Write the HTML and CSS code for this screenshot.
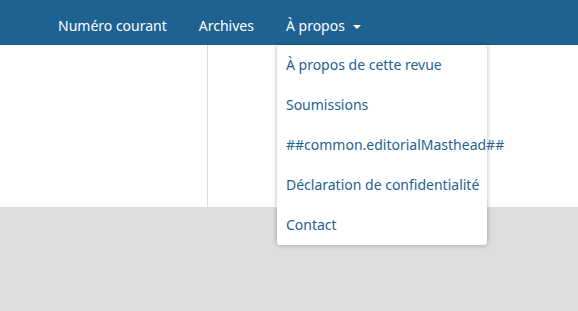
FILE: index.html
```html
<!DOCTYPE html>
<html lang="fr">
<head>
    <meta charset="UTF-8"/>
    <title>Revue</title>
    <link rel="stylesheet" href="styles.css">
</head>
<body>

<header class="site-header">
    <div class="site-name">Revue internationale des sciences humaines et sociales appliquées</div>
    <nav class="main-nav">
        <ul class="menu">
            <li><a href="#">Numéro courant</a></li>
            <li><a href="#">Archives</a></li>
            <li class="has-dropdown">
                <a href="#">À propos <span class="caret"></span></a>
                <ul class="dropdown">
                    <li><a href="#">À propos de cette revue</a></li>
                    <li><a href="#">Soumissions</a></li>
                    <li><a href="#">##common.editorialMasthead##</a></li>
                    <li><a href="#">Déclaration de confidentialité</a></li>
                    <li><a href="#">Contact</a></li>
                </ul>
            </li>
        </ul>
    </nav>
</header>

<div class="page-content">
    <main class="main-col"></main>
    <aside class="sidebar"></aside>
</div>

<footer class="site-footer"></footer>

</body>
</html>
```

FILE: styles.css
```css
body {
  margin: 0;
  font-family: 'Noto Sans', sans-serif;
  font-size: 14px;
  background: #ddd;
  height: 311px;
  overflow: hidden;
}

.site-header {
  display: flow-root;
  background: #1e6292;
  height: 45px;
}

/* title sits mostly above the viewport, only its foot shows */
.site-name {
  color: #ffffff;
  font-size: 27px;
  line-height: 30px;
  margin-top: -25px;
  height: 26px;
  padding-left: 62px;
  white-space: nowrap;
  overflow: hidden;
  opacity: 0.6;
}

.main-nav {
  padding-left: 42px;
}

.menu {
  list-style: none;
  margin: 0;
  padding: 15px 0 0;
  display: flex;
  align-items: flex-start;
}

.menu > li {
  position: relative;
}

.menu > li > a {
  display: block;
  padding: 0 16px;
  color: #ffffff;
  text-decoration: none;
  line-height: 20px;
}

.caret {
  display: inline-block;
  width: 0;
  height: 0;
  margin-left: 4px;
  vertical-align: middle;
  border-top: 4px solid #ffffff;
  border-left: 4px solid transparent;
  border-right: 4px solid transparent;
}

.dropdown {
  position: absolute;
  top: 29px;
  left: 7px;
  width: 210px;
  list-style: none;
  margin: 0;
  padding: 0;
  background: #ffffff;
  border-radius: 3px;
  box-shadow: 0 0 5px rgba(0, 0, 0, 0.3);
}

.dropdown a {
  display: block;
  height: 40px;
  line-height: 40px;
  padding: 0 9px;
  color: #1e6292;
  text-decoration: none;
  white-space: nowrap;
}

.page-content {
  display: flex;
  background: #ffffff;
  height: 162px;
}

.main-col {
  width: 207px;
  border-right: 1px solid #ddd;
}

.sidebar {
  flex: 1;
}
```
